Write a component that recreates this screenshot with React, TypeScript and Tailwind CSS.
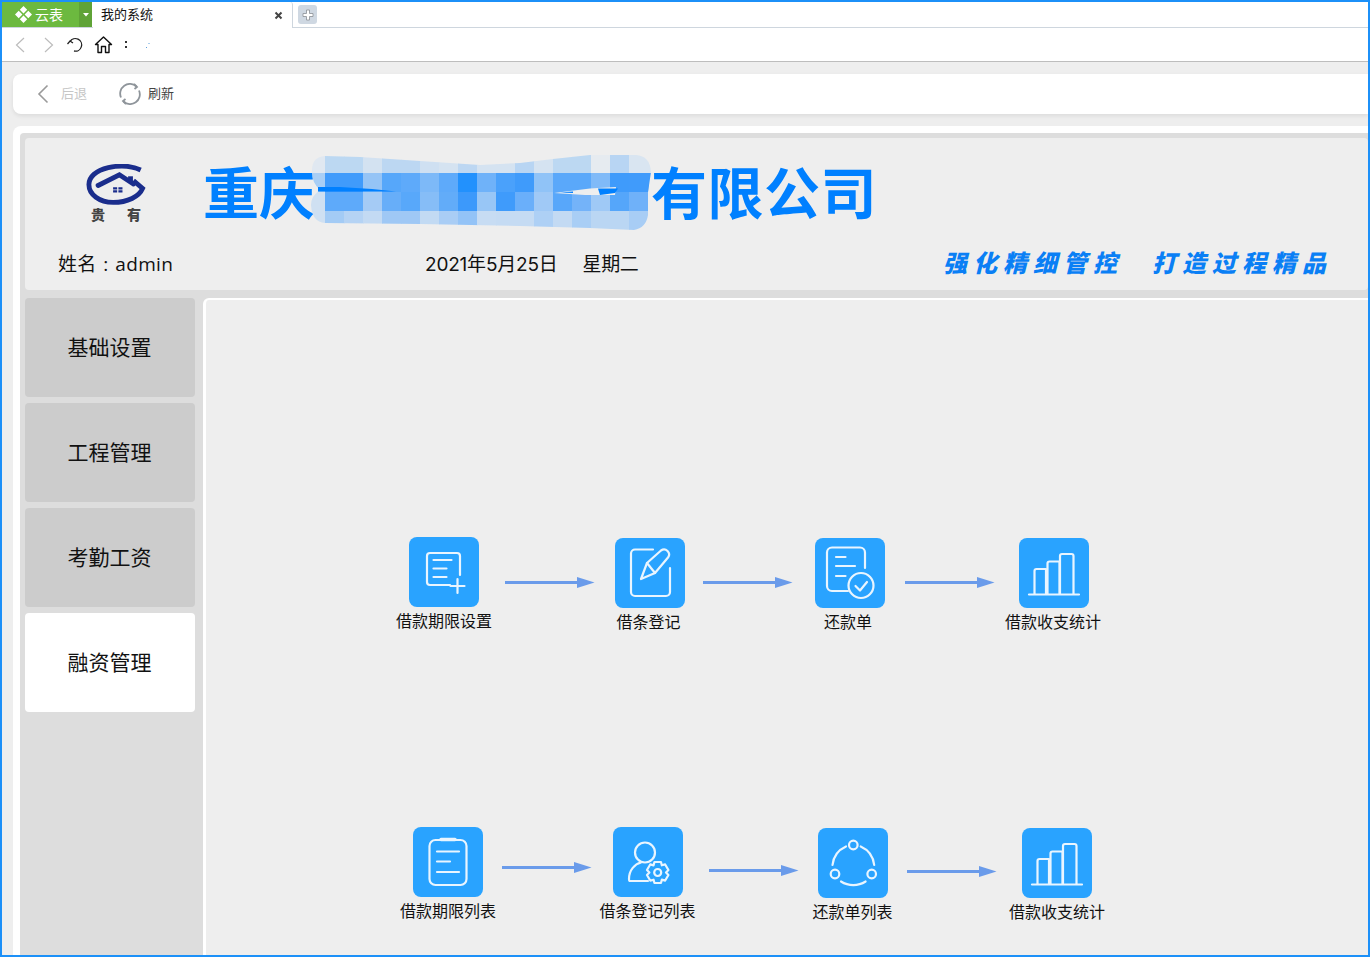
import React from "react";

const S = "font-['Inter','Noto_Sans_CJK_SC',sans-serif]";

function gearPath(cx: number, cy: number, R: number, r: number) {
  const pts: string[] = [];
  for (let i = 0; i < 6; i++) {
    const a = (Math.PI / 3) * i - Math.PI / 2;
    const d = 0.3;
    const p = (ang: number, rad: number) => `${(cx + Math.cos(ang) * rad).toFixed(2)} ${(cy + Math.sin(ang) * rad).toFixed(2)}`;
    pts.push(`${i === 0 ? "M" : "L"}${p(a - d, R)}`);
    pts.push(`L${p(a + d, R)}`);
    pts.push(`L${p(a + 0.52, r)}`);
  }
  return pts.join(" ") + "Z";
}

const strokeProps = {
  fill: "none",
  stroke: "#e9f5ff",
  strokeWidth: 2.2,
  strokeLinecap: "round" as const,
  strokeLinejoin: "round" as const,
};

function Svg70({ children }: { children: React.ReactNode }) {
  return (
    <svg width="70" height="70" viewBox="0 0 70 70" {...strokeProps}>
      {children}
    </svg>
  );
}

const IconAdd = () => (
  <Svg70>
    <path d="M51 38V19a3 3 0 0 0-3-3H21a3 3 0 0 0-3 3v26a3 3 0 0 0 3 3h20" />
    <path d="M24.5 23h18M24.5 31.5h13M24.5 40h13" />
    <path d="M41.5 49h14M48.5 42v14" />
  </Svg70>
);
const IconEdit = () => (
  <Svg70>
    <path d="M38 11.5H20a4 4 0 0 0-4 4V54a4 4 0 0 0 4 4h31a4 4 0 0 0 4-4V30" />
    <path d="M26 41l6-16 14-12.5a5 5 0 0 1 7 7L40 35z" />
    <path d="M32 25l8 10" />
  </Svg70>
);
const IconCheck = () => (
  <Svg70>
    <path d="M33 53H17a5 5 0 0 1-5-5V14.5a5 5 0 0 1 5-5h28a5 5 0 0 1 5 5V30" />
    <path d="M21 19h9.5M21 28h19M21 38h9.5" />
    <circle cx="46" cy="47.5" r="12.5" />
    <path d="M40.5 48l4.5 4.5 7-8.5" />
  </Svg70>
);
const IconBars = () => (
  <Svg70>
    <path d="M10 56.5h50" />
    <path d="M15.5 56V33a2 2 0 0 1 2-2h9.5v25" />
    <path d="M28.5 56V25.5a2 2 0 0 1 2-2h10v32.5" />
    <path d="M41 56V18a2 2 0 0 1 2-2h9.5a2 2 0 0 1 2 2v38" />
  </Svg70>
);
const IconClipboard = () => (
  <Svg70>
    <rect x="16.5" y="13" width="37" height="45" rx="6" />
    <path d="M28 12.5h14" strokeWidth={3.5} />
    <path d="M24 24.5h22M24 34.5h13M24 45h22" />
  </Svg70>
);
const IconUserGear = () => (
  <Svg70>
    <circle cx="32" cy="25.5" r="10" />
    <path d="M35 54H17c-1 0-1-1-1-2 0-9 6-15 12-16.500" />
    <path d={gearPath(44.7, 45.5, 11, 8.3)} />
    <circle cx="44.7" cy="45.5" r="3.500" />
  </Svg70>
);
const IconShare = () => (
  <Svg70>
    <circle cx="35.300" cy="17" r="4.300" />
    <circle cx="17" cy="46" r="4.300" />
    <circle cx="53.700" cy="46" r="4.300" />
    <path d="M14.500 37A23 23 0 0 1 28 18.500" />
    <path d="M42.700 18.500A23 23 0 0 1 56.200 37" />
    <path d="M23 53.500A23 23 0 0 0 47.600 53.500" />
  </Svg70>
);

function Arrow({ className }: { className: string }) {
  return (
    <svg className={`absolute ${className}`} width="90" height="14" viewBox="0 0 90 14">
      <rect x="0" y="6" width="74" height="3" fill="#6a9bea" />
      <path d="M72 2L89.500 7.500 72 13z" fill="#6a9bea" />
    </svg>
  );
}

function Node({ className, label, labelClass = "", children }: { className: string; label: string; labelClass?: string; children: React.ReactNode }) {
  return (
    <div className={`absolute flex w-[70px] flex-col items-center ${className}`}>
      <div className="flex h-[70px] w-[70px] items-center justify-center rounded-[8px] bg-[#29a3ff]">{children}</div>
      <span className={`mt-[4px] whitespace-nowrap text-[16px] leading-[21px] text-[#111] ${labelClass}`}>{label}</span>
    </div>
  );
}

const mosaicCols = [325, 344, 363, 382, 401, 420, 439, 458, 477, 496, 515, 534, 553, 572, 591, 610, 629];
const mosaicRows: [number, number, string, string[]][] = [
  [150, 23, "#e0e8f1", ["#bcd8f2", "#bcd8f2", "#d3e2f1", "#bcd7f2", "#bcd7f2", "#cfe0f2", "#d5e3f1", "#bdd7f2", "#d5e3f1", "#d5e3f1", "#b8d5f3", "#d5e3f1", "#bcd8f2", "#bcd8f2", "#e6ebf0", "#b8d5f3", "#d9e5f1"]],
  [173, 19, "#a8cef5", ["#409bfb", "#409bfb", "#95c4f6", "#56a7fa", "#5eaafa", "#7db9f8", "#5eaafa", "#2291fd", "#6fb2f9", "#4aa1fb", "#3f9bfb", "#90c3f7", "#5aa8fa", "#5aa8fa", "#80baf8", "#3f9bfb", "#409bfb"]],
  [192, 19, "#cfe0f2", ["#5eaafa", "#5eaafa", "#a5cbf5", "#67aef9", "#58a8fa", "#86bdf7", "#62acf9", "#3c99fb", "#98c6f6", "#3f9bfb", "#6aaffa", "#a0c9f6", "#58a7fa", "#74b3f9", "#9fc9f6", "#55a6fa", "#6fb1f9"]],
  [211, 22, "#cfe0f2", ["#a3cbf5", "#b5d3f4", "#c3daf3", "#9fc8f5", "#9fc8f5", "#c2daf3", "#a9cdf5", "#93c3f7", "#c7dcf3", "#c5dbf3", "#c5dbf3", "#aed0f5", "#c3daf3", "#a9cef5", "#bad6f3", "#bad6f3", "#a8cdf5"]],
];

function Mosaic() {
  return (
    <svg className="absolute left-[286px] top-[14px]" width="345" height="82" viewBox="311 152 345 82">
      <defs>
        <clipPath id="mosaicClip">
          <path d="M312 170Q312 157 325 156L360 157L420 161L480 165L520 163L553 159L590 155L636 155Q650 156 651 172L648 192V215Q646 228 634 230L590 228L520 226L420 224L325 223Q312 222 311 205Q311 196 320 190Q311 182 312 170Z" />
        </clipPath>
      </defs>
      <g clipPath="url(#mosaicClip)">
        {mosaicRows.map(([y, h, edge, cells]) => (
          <g key={y}>
            <rect x="311" y={y} width="14" height={h} fill={edge} />
            {cells.map((c, i) => (
              <rect key={i} x={mosaicCols[i]} y={y} width="19.5" height={h} fill={c} />
            ))}
            <rect x="648" y={y} width="6" height={h} fill={cells[16]} />
          </g>
        ))}
      </g>
      <path d="M318 187H340L372 189L396 191.500H318Z" fill="#0080ff" />
      <path d="M554 193L590 188.500L616 187L615 195L585 195Z" fill="#eeeeee" />
      <path d="M560 192.500L573 191.500L573 193Z" fill="#0080ff" />
      <path d="M598 188.500H618L615 193L600 195Z" fill="#0080ff" />
    </svg>
  );
}

function Logo() {
  return (
    <div className="flex h-[60px] w-[60px] flex-col items-center">
      <svg width="60" height="42" viewBox="85 164 62 42" fill="none" stroke="#1a2d8c" strokeWidth="5">
        <path d="M141.500 169.500C133 165.500 120 164.500 108 167C95 170 88 177 88 184.500C88 195 99 203 113 203C128 203 140 197 143.500 188.500L134 180.500" />
        <path d="M97.500 185.500L119.500 174.500L134 184" strokeLinecap="round" />
        <path d="M131 176V182" strokeWidth="5" />
        <path d="M113 188.500h4.200M118.500 188.500h4.200M113 191.500h4.200M118.500 191.500h4.200" stroke="#1a2d8c" strokeWidth="2.300" />
      </svg>
      <div className="mt-[1px] flex gap-[22px] text-[14px] font-black leading-[16px] text-[#444]">
        <span>贵</span>
        <span>有</span>
      </div>
    </div>
  );
}

function Toolbar() {
  return (
    <div className="flex h-[34px] shrink-0 items-center border-b border-[#bdbdbd] bg-white">
      <svg className="ml-[12px]" width="12" height="18" viewBox="0 0 12 18" fill="none" stroke="#bcbcbc" strokeWidth="1.200"><path d="M10 2L2.500 9 10 16" /></svg>
      <svg className="ml-[17px]" width="12" height="18" viewBox="0 0 12 18" fill="none" stroke="#bcbcbc" strokeWidth="1.200"><path d="M2 2l7.500 7L2 16" /></svg>
      <svg className="ml-[11px]" width="18" height="18" viewBox="0 0 18 18" fill="none" stroke="#222" strokeWidth="1.300">
        <path d="M4 5.500A6.300 6.300 0 1 1 8 15" />
        <path d="M1.500 8L4 5l3 2" />
      </svg>
      <svg className="ml-[10px]" width="19" height="19" viewBox="0 0 19 19" fill="none" stroke="#111" strokeWidth="1.400" strokeLinejoin="round">
        <path d="M1.500 9.500L9.500 2l8 7.500h-2.500V17.500h-3.500V11.500h-4V17.500H4V9.500z" />
      </svg>
      <span className="ml-[12px] flex flex-col gap-[3px]">
        <i className="block h-[2px] w-[2px] bg-[#333]" />
        <i className="block h-[2px] w-[2px] bg-[#333]" />
      </span>
      <svg className="ml-[18px]" width="6" height="8" viewBox="0 0 6 8"><path d="M1 7l1-1M3.500 3l1-1" stroke="#5aa0dd" strokeWidth="1" /></svg>
    </div>
  );
}

export default function App() {
  return (
    <div className={`flex h-[957px] w-[1370px] flex-col overflow-hidden border-2 border-[#1c90f8] bg-[#eeeeee] ${S}`}>
      <div className="flex h-[26px] shrink-0 border-b border-[#ced6de] bg-white">
        <div className="flex w-[77px] items-center bg-[#6cb93f] pl-[13px] text-[14px] text-white">
          <svg width="17" height="17" viewBox="0 0 17 17" fill="#fff">
            <path d="M8.500 0l3.700 3.700-3.700 3.700-3.700-3.700zM3.700 4.800l3.700 3.700-3.700 3.700L0 8.500zM13.300 4.800L17 8.500l-3.700 3.700-3.700-3.700zM8.500 9.600l3.700 3.700L8.500 17l-3.700-3.700z" />
          </svg>
          <span className="ml-[3px]">云表</span>
        </div>
        <div className="flex w-[13px] items-center justify-center bg-[#5fa337]">
          <svg width="6" height="4" viewBox="0 0 6 4" fill="#fff"><path d="M0 0h6L3 3.500z" /></svg>
        </div>
        <div className="ml-[1px] flex h-[26px] w-[200px] items-center justify-between rounded-t-[3px] border-r border-[#ced6de] bg-white pl-[8px] pr-[9px] text-[13px] text-[#111]">
          <span>我的系统</span>
          <svg width="9" height="9" viewBox="0 0 9 9" stroke="#444" strokeWidth="2"><path d="M1.500 1.500l6 6M7.500 1.500l-6 6" /></svg>
        </div>
        <div className="ml-[5px] mt-[3px] flex h-[19px] w-[19px] items-center justify-center rounded-[3px] bg-[#cfd8e2]">
          <svg width="12" height="12" viewBox="0 0 12 12" fill="#fff" stroke="#8a8f96" strokeWidth="0.800"><path d="M4.500 1h3v3.500H11v3H7.500V11h-3V7.500H1v-3h3.500z" /></svg>
        </div>
      </div>
      <Toolbar />
      <div className="flex min-h-0 flex-1 flex-col pl-[11px] pt-[12px]">
        <div className="flex h-[40px] shrink-0 items-center rounded-l-[8px] bg-white shadow-[0_2px_4px_rgba(0,0,0,0.08)]">
          <svg className="ml-[24px]" width="12" height="20" viewBox="0 0 12 20" fill="none" stroke="#9a9a9a" strokeWidth="1.600"><path d="M10.500 1.500L2 10l8.500 8.500" /></svg>
          <span className="ml-[12px] text-[13px] text-[#c6c6c6]">后退</span>
          <svg className="ml-[32px]" width="22" height="22" viewBox="0 0 22 22" fill="none" stroke="#8f959b" strokeWidth="1.800">
            <path d="M2 14.500A9.700 9.700 0 0 1 17.500 3.500" />
            <path d="M20 7.500A9.700 9.700 0 0 1 4.500 18.500" />
            <path d="M15 1l3 3-2.500 2M7 21l-3-3 2.500-2" />
          </svg>
          <span className="ml-[7px] text-[13px] text-[#444]">刷新</span>
        </div>
        <div className="mt-[12px] flex min-h-0 flex-1 flex-col rounded-tl-[8px] bg-white pl-[7px] pt-[7px]">
          <div className="flex min-h-0 flex-1 flex-col gap-[8px] rounded-tl-[4px] bg-[#dddddd] pl-[5px] pt-[5px]">
            <header className="relative h-[152px] shrink-0 rounded-[4px] bg-[#eeeeee]">
              <div className="flex h-[112px] items-center pl-[61px]">
                <Logo />
                <h1 className="ml-[57px] flex text-[56px] font-bold leading-[64px] text-[#0080ff]">
                  <span>重庆</span>
                  <span className="w-[336px]" />
                  <span className="tracking-[0.5px]">有限公司</span>
                </h1>
              </div>
              <Mosaic />
              <div className="flex h-[30px] items-center pl-[33px] pr-[36px] text-[19px] leading-[28px] text-[#111]">
                <span className="mb-[2px] w-[367px] font-['Open_Sans','Noto_Sans_CJK_SC',sans-serif] tracking-[0.3px] [word-spacing:1.5px]">姓名 : admin</span>
                <span className="tracking-[-0.2px]">2021年5月25日</span>
                <span className="ml-[25px] tracking-[-0.4px]">星期二</span>
                <div className="mb-[3px] ml-auto flex gap-[29px] text-[24px] font-black italic leading-[28px] tracking-[6px] text-[#0a7ff5]">
                  <span>强化精细管控</span>
                  <span>打造过程精品</span>
                </div>
              </div>
            </header>
            <div className="flex min-h-0 flex-1 gap-[8px]">
              <nav className="flex w-[170px] shrink-0 flex-col gap-[6px] text-[21px] text-[#111]">
                <div className="flex h-[99px] items-center justify-center rounded-[4px] bg-[#cccccc] pr-[1px]">基础设置</div>
                <div className="flex h-[99px] items-center justify-center rounded-[4px] bg-[#cccccc] pr-[1px]">工程管理</div>
                <div className="flex h-[99px] items-center justify-center rounded-[4px] bg-[#cccccc] pr-[1px]">考勤工资</div>
                <div className="flex h-[99px] items-center justify-center rounded-[4px] bg-white pr-[1px]">融资管理</div>
              </nav>
              <main className="relative min-w-0 flex-1 rounded-tl-[6px] border-l-[3px] border-t-[2px] border-white bg-[#eeeeee]">
                <Node className="left-[203px] top-[237px]" label="借款期限设置"><IconAdd /></Node>
                <Arrow className="left-[299px] top-[275px]" />
                <Node className="left-[409px] top-[238px]" label="借条登记" labelClass="-ml-[3px]"><IconEdit /></Node>
                <Arrow className="left-[497px] top-[275px]" />
                <Node className="left-[609px] top-[238px]" label="还款单" labelClass="-ml-[4px]"><IconCheck /></Node>
                <Arrow className="left-[699px] top-[275px]" />
                <Node className="left-[813px] top-[238px]" label="借款收支统计" labelClass="-ml-[2px]"><IconBars /></Node>

                <Node className="left-[207px] top-[527px]" label="借款期限列表"><IconClipboard /></Node>
                <Arrow className="left-[296px] top-[560px]" />
                <Node className="left-[407px] top-[527px]" label="借条登记列表" labelClass="-ml-[1px]"><IconUserGear /></Node>
                <Arrow className="left-[503px] top-[563px]" />
                <Node className="left-[612px] top-[528px]" label="还款单列表" labelClass="-ml-[1px]"><IconShare /></Node>
                <Arrow className="left-[701px] top-[564px]" />
                <Node className="left-[816px] top-[528px]" label="借款收支统计"><IconBars /></Node>
              </main>
            </div>
          </div>
        </div>
      </div>
    </div>
  );
}
